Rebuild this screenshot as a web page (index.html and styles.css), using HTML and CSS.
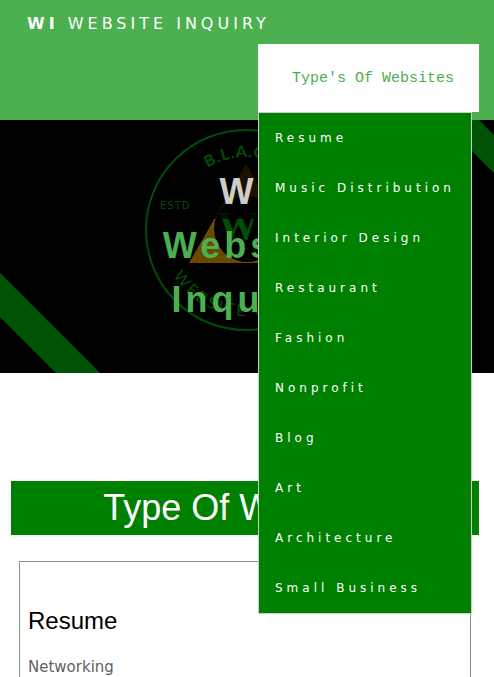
FILE: index.html
```html
<!DOCTYPE html>
<html lang="en">
<head>
<meta charset="utf-8">
<meta name="viewport" content="width=device-width, initial-scale=1">
<title>Website Inquiry</title>
<link rel="stylesheet" href="styles.css">
</head>
<body>
<header class="topbar">
  <a class="brand" href="#home"><b>WI</b> WEBSITE INQUIRY</a>
  <nav class="dropdown">
    <button class="dropdown-button" type="button">Type's Of Websites</button>
    <div class="dropdown-menu">
      <a href="#resume">Resume</a>
      <a href="#music">Music Distribution</a>
      <a href="#interior">Interior Design</a>
      <a href="#restaurant">Restaurant</a>
      <a href="#fashion">Fashion</a>
      <a href="#nonprofit">Nonprofit</a>
      <a href="#blog">Blog</a>
      <a href="#art">Art</a>
      <a href="#architecture">Architecture</a>
      <a href="#business">Small Business</a>
    </div>
  </nav>
</header>
<section class="hero" id="home">
  <svg class="hero-art" viewBox="0 0 494 253" preserveAspectRatio="xMidYMid slice" aria-hidden="true">
    <defs>
      <path id="arc-top" d="M173 110a73 73 0 0 1 146 0"/>
      <path id="arc-bottom" d="M160 110a86 86 0 0 0 172 0"/>
    </defs>
    <path class="band" d="M0 153L100 253H56L0 197ZM479 0L494 15V53L441 0Z"/>
    <circle class="ring" cx="246" cy="110" r="100"/>
    <path class="base" d="M246 44L303 143H189Z"/>
    <circle cx="247" cy="109" r="33"/>
    <text class="monogram" x="218" y="119">WI</text>
    <path class="shade" d="M189 40H303V99H189Z"/>
    <text class="estd" x="160" y="89">ESTD</text>
    <text class="seal seal-top"><textPath href="#arc-top" startOffset="74">B.L.A.C.</textPath></text>
    <text class="seal"><textPath href="#arc-bottom" startOffset="48">WEBSITE INQUIRY</textPath></text>
  </svg>
  <h1 class="hero-title"><span class="initials">WI</span><span>Website</span><span>Inquiry</span></h1>
</section>
<main class="content">
  <h2 class="section-title">Type Of Websites</h2>
  <article class="card" id="resume">
    <h3>Resume</h3>
    <p>Networking</p>
  </article>
</main>
</body>
</html>
```
FILE: styles.css
```css
* { box-sizing: border-box; }
body {
  margin: 0;
  background: #fff;
  font: 15px/1.5 Verdana, "DejaVu Sans", sans-serif;
}
a { color: inherit; text-decoration: none; }
.topbar {
  display: flex;
  flex-direction: column;
  height: 120px;
  padding: 12px 15px 8px 27px;
  background: #4caf50;
  color: #fff;
}
.brand {
  font-size: 16px;
  line-height: 24px;
  letter-spacing: 4px;
}
.dropdown {
  position: relative;
  align-self: flex-end;
  margin-top: 8px;
}
.dropdown-button {
  display: block;
  width: 221px;
  height: 68px;
  padding: 0 24px 0 33px;
  border: 0;
  background: #fff;
  color: #4caf50;
  font: 15px "Liberation Mono", monospace;
  white-space: nowrap;
}
.dropdown-menu {
  position: absolute;
  z-index: 2;
  top: 68px;
  left: 0;
  width: 214px;
  border: 1px solid #ccc;
  background: green;
}
.dropdown-menu a {
  display: block;
  padding: 16px;
  font-size: 12px;
  line-height: 18px;
  letter-spacing: 4px;
  white-space: nowrap;
}
.hero {
  position: relative;
  height: 253px;
  overflow: hidden;
  background: #000;
}
.hero-art {
  display: block;
  width: 100%;
  height: 100%;
}
.band { fill: #005207; }
.ring { fill: none; stroke: #004d05; stroke-width: 2; }
.base { fill: #6b4a00; }
.shade { fill: #000; opacity: 0.75; }
.monogram { fill: #004d05; font: bold 40px "Liberation Serif", serif; }
.estd { fill: #004d05; font: 10px "DejaVu Sans", sans-serif; letter-spacing: 1px; }
.seal { fill: #004d05; font: 16px Lato, sans-serif; letter-spacing: 3px; }
.seal-top { font-weight: bold; letter-spacing: 1px; }
.hero-title {
  position: absolute;
  top: 45px;
  left: 0;
  width: 100%;
  margin: 0;
  padding-right: 3px;
  color: #4caf50;
  font: bold 36px/54px "Liberation Sans", sans-serif;
  letter-spacing: 4px;
  text-align: center;
}
.hero-title span { display: block; }
.initials { color: #fff; opacity: 0.8; }
.content { padding: 108px 15px 0 11px; }
.section-title {
  margin: 0 0 26px;
  background: green;
  color: #fff;
  font: 36px/54px "Liberation Sans", sans-serif;
  text-align: center;
}
.card {
  margin: 0 8px;
  padding: 41px 8px 64px;
  border: 1px solid #7f987f;
}
.card h3 {
  margin: 0;
  font: 24px/36px "Liberation Sans", sans-serif;
}
.card p {
  margin: 16px 0;
  color: #616161;
  line-height: 24px;
}
```
